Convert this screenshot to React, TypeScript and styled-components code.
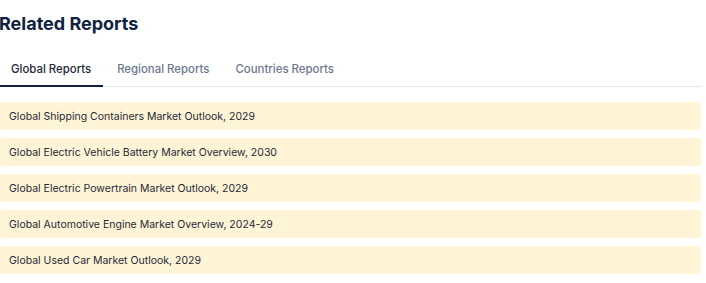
import React, { useState } from "react";
import styled, { createGlobalStyle } from "styled-components";

const GlobalStyle = createGlobalStyle`
  body {
    margin: 0;
    background: #fff;
    font-family: Inter, "Noto Sans", sans-serif;
  }
`;

const reports = [
  "Global Shipping Containers Market Outlook, 2029",
  "Global Electric Vehicle Battery Market Overview, 2030",
  "Global Electric Powertrain Market Outlook, 2029",
  "Global Automotive Engine Market Overview, 2024-29",
  "Global Used Car Market Outlook, 2029",
];

const tabs = ["Global Reports", "Regional Reports", "Countries Reports"];

const App = () => {
  const [active, setActive] = useState(0);

  return (
    <Container>
      <GlobalStyle />
      <Title>Related Reports</Title>
      <TabBar>
        {tabs.map((t, i) => (
          <Tab key={t} $active={i === active} onClick={() => setActive(i)}>
            {t}
          </Tab>
        ))}
      </TabBar>
      <List>
        {reports.map((r) => (
          <Item key={r}>{r}</Item>
        ))}
      </List>
    </Container>
  );
};

export default App;

const Container = styled.div`
  width: 701px;
  padding-top: 12px;
`;

const Title = styled.h2`
  margin: 0 0 0 -1px;
  font-size: 18px;
  line-height: 24px;
  font-weight: 700;
  color: #0f2240;
`;

const TabBar = styled.div`
  display: flex;
  gap: 3px;
  margin-top: 24px;
  border-bottom: 1px solid #e5e7eb;
`;

const Tab = styled.button<{ $active: boolean }>`
  background: none;
  border: 0;
  margin: 0 0 -1px;
  padding: 0 12px 8px 11px;
  height: 27px;
  font-family: Inter, "Noto Sans", sans-serif;
  font-size: 11.4px;
  font-weight: 500;
  color: ${(p) => (p.$active ? "#1f2937" : "#6b7890")};
  border-bottom: 2px solid ${(p) => (p.$active ? "#0f2240" : "transparent")};
  cursor: pointer;
`;

const List = styled.div`
  display: flex;
  flex-direction: column;
  gap: 8px;
  margin-top: 15px;
`;

const Item = styled.div`
  height: 28px;
  display: flex;
  align-items: center;
  padding-left: 9px;
  background: #fff4d6;
  border-radius: 4px;
  font-size: 10.5px;
  color: #1f2937;
`;
